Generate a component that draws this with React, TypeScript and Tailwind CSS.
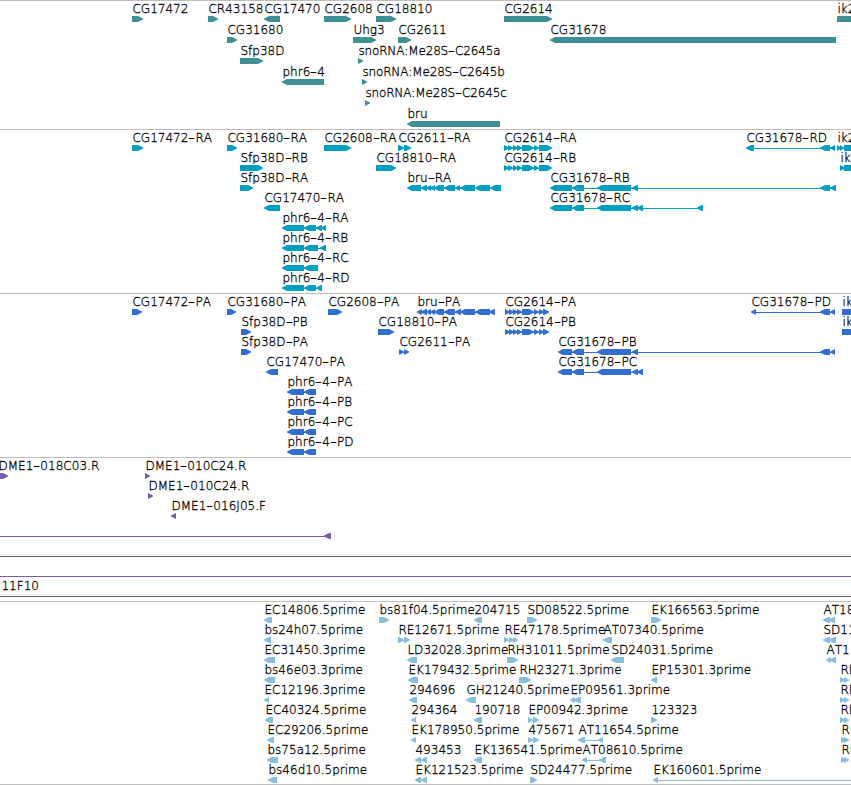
import React from 'react'

type Strand = '+' | '-'
type Span = [start: number, end: number]

interface Feature {
  label?: string
  strand: Strand
  spans: Span[]
  // label offset when it doesn't start at the first span
  labelX?: number
}

interface Track {
  id: string
  color: string
  height: string
  rowHeight: string
  rows: Feature[][]
}

const VIEW_WIDTH = 851
const TIP = 5

function fwd(label: string, ...spans: Span[]): Feature {
  return { label, strand: '+', spans }
}

function rev(label: string, ...spans: Span[]): Feature {
  return { label, strand: '-', spans }
}

const CG2614_R: Span[] = [[504, 509], [508, 513], [513, 518], [517, 522], [522, 534], [534, 539], [539, 552]]
const CG2614_P: Span[] = [[505, 510], [509, 514], [513, 518], [517, 522], [522, 534], [534, 539], [539, 544], [543, 549]]
const CG31678_R: Span[] = [[550, 572], [572, 584], [597, 631], [632, 638]]
const CG31678_P: Span[] = [[558, 572], [572, 584], [597, 631], [632, 638]]
const PHR_P: Span[] = [[287, 304], [304, 316]]

const TRACKS: Track[] = [
  {
    id: 'gene',
    color: '#3f9095',
    height: 'h-[129px]',
    rowHeight: 'h-[21px]',
    rows: [
      [
        fwd('CG17472', [132, 143]),
        fwd('CR43158', [208, 218]),
        rev('CG17470', [264, 280]),
        fwd('CG2608', [324, 351]),
        fwd('CG18810', [376, 396]),
        fwd('CG2614', [504, 552]),
        fwd('ik2', [837, 870]),
      ],
      [fwd('CG31680', [227, 237]), fwd('Uhg3', [353, 376]), fwd('CG2611', [398, 411]), rev('CG31678', [550, 836])],
      [fwd('Sfp38D', [240, 263]), fwd('snoRNA:Me28S-C2645a', [358, 363])],
      [rev('phr6-4', [282, 324]), fwd('snoRNA:Me28S-C2645b', [362, 367])],
      [fwd('snoRNA:Me28S-C2645c', [365, 370])],
      [rev('bru', [407, 500])],
    ],
  },
  {
    id: 'transcript',
    color: '#009fc0',
    height: 'h-[164px]',
    rowHeight: 'h-5',
    rows: [
      [
        fwd('CG17472-RA', [132, 143]),
        fwd('CG31680-RA', [227, 237]),
        fwd('CG2608-RA', [324, 351]),
        fwd('CG2611-RA', [398, 404], [404, 411]),
        fwd('CG2614-RA', ...CG2614_R),
        rev('CG31678-RD', [746, 754], [820, 830], [830, 835]),
        fwd('ik2-RA', [837, 841], [840, 844], [844, 870]),
      ],
      [
        fwd('Sfp38D-RB', [240, 263]),
        fwd('CG18810-RA', [376, 396]),
        fwd('CG2614-RB', ...CG2614_R),
        fwd('ik2-RB', [840, 845], [844, 870]),
      ],
      [
        fwd('Sfp38D-RA', [240, 253]),
        rev('bru-RA', [407, 421], [421, 427], [426, 431], [430, 435], [434, 444], [444, 455], [455, 460], [460, 475], [475, 490], [490, 501]),
        rev('CG31678-RB', ...CG31678_R, [820, 830], [830, 836]),
      ],
      [rev('CG17470-RA', [264, 280]), rev('CG31678-RC', ...CG31678_R, [637, 643], [697, 703])],
      [rev('phr6-4-RA', [282, 304], [304, 316], [316, 322], [321, 326])],
      [rev('phr6-4-RB', [282, 304], [304, 318], [320, 326])],
      [rev('phr6-4-RC', [282, 304], [304, 318])],
      [rev('phr6-4-RD', [282, 304], [304, 316], [316, 322])],
    ],
  },
  {
    id: 'protein',
    color: '#326ecd',
    height: 'h-[164px]',
    rowHeight: 'h-5',
    rows: [
      [
        fwd('CG17472-PA', [132, 142]),
        fwd('CG31680-PA', [227, 236]),
        fwd('CG2608-PA', [328, 342]),
        rev('bru-PA', [417, 422], [421, 427], [426, 431], [430, 435], [434, 444], [444, 455], [455, 461], [460, 475], [475, 490], [489, 495]),
        fwd('CG2614-PA', ...CG2614_P),
        rev('CG31678-PD', [751, 756], [820, 830], [830, 835]),
        fwd('ik2-PA', [842, 870]),
      ],
      [
        fwd('Sfp38D-PB', [241, 251]),
        fwd('CG18810-PA', [378, 394]),
        fwd('CG2614-PB', ...CG2614_P),
        fwd('ik2-PB', [842, 870]),
      ],
      [
        fwd('Sfp38D-PA', [241, 251]),
        fwd('CG2611-PA', [399, 404], [404, 409]),
        rev('CG31678-PB', ...CG31678_P, [820, 830], [830, 835]),
      ],
      [rev('CG17470-PA', [266, 278]), rev('CG31678-PC', ...CG31678_P, [637, 643])],
      [rev('phr6-4-PA', ...PHR_P)],
      [rev('phr6-4-PB', ...PHR_P)],
      [rev('phr6-4-PC', ...PHR_P)],
      [rev('phr6-4-PD', ...PHR_P)],
    ],
  },
  {
    id: 'clone',
    color: '#795cab',
    height: 'h-36',
    rowHeight: 'h-5',
    rows: [
      [fwd('DME1-018C03.R', [-2, 8]), fwd('DME1-010C24.R', [145, 150])],
      [fwd('DME1-010C24.R', [148, 153])],
      [rev('DME1-016J05.F', [171, 176])],
      [{ strand: '-', spans: [[-20, -10], [324, 331]] }],
      [{ strand: '+', spans: [[-20, -10], [870, 880]] }],
      [{ strand: '+', spans: [[-20, -10], [870, 880]] }],
      [{ label: '11F10', labelX: 1, strand: '+', spans: [[-20, -10], [870, 880]] }],
    ],
  },
  {
    id: 'est',
    color: '#87bddf',
    height: 'h-[183px]',
    rowHeight: 'h-5',
    rows: [
      [
        rev('EC14806.5prime', [264, 272]),
        fwd('bs81f04.5prime', [379, 389]),
        rev('204715', [474, 482]),
        fwd('SD08522.5prime', [527, 537]),
        fwd('EK166563.5prime', [651, 661]),
        rev('AT18', [823, 830], [829, 835]),
      ],
      [
        rev('bs24h07.5prime', [264, 271]),
        fwd('RE12671.5prime', [398, 404], [404, 410]),
        fwd('RE47178.5prime', [504, 509], [509, 514], [513, 518]),
        rev('AT07340.5prime', [603, 612]),
        rev('SD11', [823, 830], [829, 836]),
      ],
      [
        rev('EC31450.3prime', [264, 275]),
        rev('LD32028.3prime', [407, 417]),
        fwd('RH31011.5prime', [507, 518]),
        rev('SD24031.5prime', [611, 624]),
        rev('AT1', [826, 831], [830, 836]),
      ],
      [
        rev('bs46e03.3prime', [264, 275]),
        rev('EK179432.5prime', [408, 418]),
        fwd('RH23271.3prime', [519, 531]),
        rev('EP15301.3prime', [651, 657]),
        fwd('RF', [840, 845], [844, 849]),
      ],
      [
        rev('EC12196.3prime', [264, 269]),
        rev('294696', [409, 417]),
        rev('GH21240.5prime', [466, 476]),
        rev('EP09561.3prime', [570, 575], [574, 581]),
        fwd('RF', [840, 845], [844, 849]),
      ],
      [
        rev('EC40324.5prime', [265, 273]),
        rev('294364', [411, 416]),
        rev('190718', [474, 482]),
        fwd('EP00942.3prime', [528, 533], [533, 539]),
        fwd('123323', [651, 657]),
        fwd('RF', [840, 845], [844, 849]),
      ],
      [
        rev('EC29206.5prime', [267, 274]),
        rev('EK178950.5prime', [411, 416]),
        fwd('475671', [528, 533], [533, 539]),
        rev('AT11654.5prime', [578, 585], [598, 603]),
        fwd('RF', [841, 846], [844, 849]),
      ],
      [
        rev('bs75a12.5prime', [267, 278]),
        rev('493453', [415, 421], [421, 427]),
        rev('EK136541.5prime', [474, 482]),
        rev('AT08610.5prime', [582, 587], [599, 606]),
        fwd('RF', [841, 846], [844, 849]),
      ],
      [
        rev('bs46d10.5prime', [268, 277]),
        rev('EK121523.5prime', [415, 421], [421, 427]),
        fwd('SD24477.5prime', [530, 537]),
        rev('EK160601.5prime', [653, 658], [870, 880]),
      ],
    ],
  },
]

function arrowPoints([start, end]: Span, strand: Strand): string {
  const tip = Math.min(TIP, end - start)
  if (strand === '+') {
    return `${start},0 ${end - tip},0 ${end - 1},2 ${end + 0.5},3 ${end - 1},4 ${end - tip},6 ${start},6`
  }
  return `${end},0 ${start + tip},0 ${start + 1},2 ${start - 0.5},3 ${start + 1},4 ${start + tip},6 ${end},6`
}

function Glyph({ feature, color }: { feature: Feature; color: string }) {
  const { spans, strand } = feature
  const first = spans[0]
  const last = spans[spans.length - 1]
  return (
    <g fill={color}>
      {spans.length > 1 && <rect x={first[0] + 2} y={3} width={last[1] - first[0] - 4} height={1} />}
      {spans.map((span) => (
        <polygon key={span[0]} points={arrowPoints(span, strand)} />
      ))}
    </g>
  )
}

// Hyphens get a wider cell than the font gives them
function Label({ text }: { text: string }) {
  return (
    <>
      {text.split('-').map((part, i) => (
        <React.Fragment key={i}>
          {i > 0 && <span className="inline-block w-[7px] scale-x-160 text-center">-</span>}
          {part}
        </React.Fragment>
      ))}
    </>
  )
}

function FeatureRow({ features, color, height }: { features: Feature[]; color: string; height: string }) {
  return (
    <div className={`relative shrink-0 pt-[15px] ${height}`}>
      <svg className="block" width={VIEW_WIDTH} height={6} viewBox={`0 0 ${VIEW_WIDTH} 6`}>
        {features.map((f, i) => (
          <Glyph key={i} feature={f} color={color} />
        ))}
      </svg>
      {features.map((f, i) =>
        f.label ? (
          <span
            key={i}
            className={`absolute top-px ml-[0.4px] whitespace-nowrap leading-[14px] ${f.label.startsWith('sno') ? 'tracking-[-0.14px]' : 'tracking-[0.03px]'}`}
            style={{ left: f.labelX ?? f.spans[0][0] }}
          >
            <Label text={f.label} />
          </span>
        ) : null,
      )}
    </div>
  )
}

export default function App() {
  return (
    <main className="flex flex-col w-[851px] h-[785px] overflow-hidden bg-white text-black text-[12px] font-extralight [font-kerning:none] [-webkit-text-stroke:0.3px_#000] font-['DejaVu_Sans',sans-serif]">
      {TRACKS.map((track) => (
        <section key={track.id} className={`flex flex-col shrink-0 border-t border-[#bebebe] ${track.height}`}>
          {track.rows.map((features, i) => (
            <FeatureRow key={i} features={features} color={track.color} height={track.rowHeight} />
          ))}
        </section>
      ))}
      <div className="h-px bg-[#bebebe]" />
    </main>
  )
}
